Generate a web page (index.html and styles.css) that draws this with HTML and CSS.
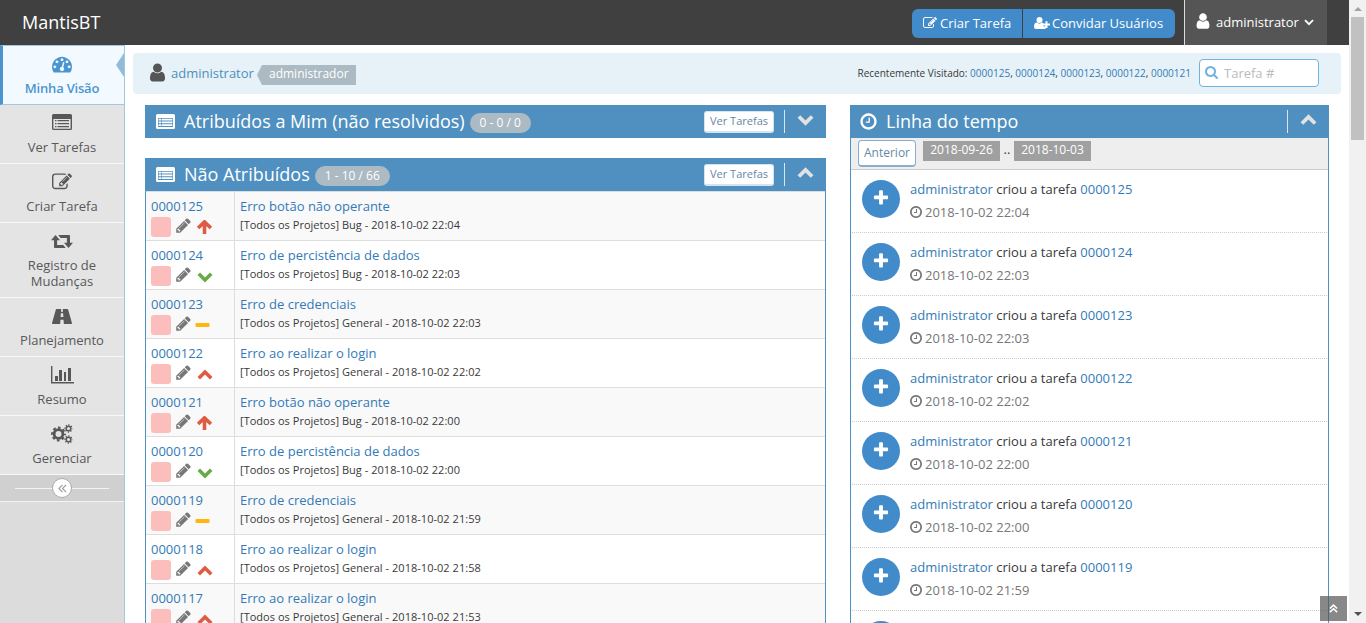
FILE: index.html
```html
<!DOCTYPE html>
<html lang="pt-BR">
<head>
<meta charset="utf-8">
<title>Minha Visão - MantisBT</title>
<link rel="stylesheet" href="styles.css">
</head>
<body>
<svg class="defs" width="0" height="0">
  <symbol id="user" viewBox="0 0 1792 1792"><path d="M1536 1399q0 109-62.5 187t-150.5 78h-854q-88 0-150.5-78t-62.5-187q0-85 8.5-160.5t31.5-152 58.5-131 94-89 134.5-34.5q131 128 313 128t313-128q76 0 134.5 34.5t94 89 58.5 131 31.5 152 8.5 160.5zm-256-887q0 159-112.5 271.5t-271.5 112.5-271.5-112.5-112.5-271.5 112.5-271.5 271.5-112.5 271.5 112.5 112.5 271.5z"/></symbol>
  <symbol id="pencil" viewBox="0 0 1792 1792"><path d="M491 1536l91-91-235-235-91 91v107h128v128h107zm523-928q0-22-22-22-10 0-17 7l-542 542q-7 7-7 17 0 22 22 22 10 0 17-7l542-542q7-7 7-17zm-54-192l416 416-832 832h-416v-416zm683 96q0 53-37 90l-166 166-416-416 166-165q36-38 90-38 53 0 91 38l235 234q37 39 37 91z"/></symbol>
  <symbol id="edit" viewBox="0 0 1792 1792"><path d="M888 1184l116-116-152-152-116 116v56h96v96h56zm440-720q-16-16-33 1l-350 350q-17 17-1 33t33-1l350-350q17-17 1-33zm80 594v190q0 119-84.5 203.5t-203.5 84.5h-832q-119 0-203.5-84.5t-84.5-203.5v-832q0-119 84.5-203.5t203.5-84.5h832q63 0 117 25 15 7 18 23 3 17-9 29l-49 49q-14 14-32 8-23-6-45-6h-832q-66 0-113 47t-47 113v832q0 66 47 113t113 47h832q66 0 113-47t47-113v-126q0-13 9-22l64-64q15-15 35-7t20 29zm-96-738l288 288-672 672h-288v-288zm444 132l-92 92-288-288 92-92q28-28 68-28t68 28l152 152q28 28 28 68t-28 68z"/></symbol>
  <symbol id="plus" viewBox="0 0 1792 1792"><path d="M1600 736v192q0 40-28 68t-68 28h-416v416q0 40-28 68t-68 28h-192q-40 0-68-28t-28-68v-416h-416q-40 0-68-28t-28-68v-192q0-40 28-68t68-28h416v-416q0-40 28-68t68-28h192q40 0 68 28t28 68v416h416q40 0 68 28t28 68z"/></symbol>
  <symbol id="clock" viewBox="0 0 1792 1792"><path d="M1024 544v448q0 14-9 23t-23 9h-320q-14 0-23-9t-9-23v-64q0-14 9-23t23-9h224v-352q0-14 9-23t23-9h64q14 0 23 9t9 23zm416 352q0-148-73-273t-198-198-273-73-273 73-198 198-73 273 73 273 198 198 273 73 273-73 198-198 73-273zm224 0q0 209-103 385.5t-279.5 279.5-385.5 103-385.5-103-279.5-279.5-103-385.5 103-385.5 279.5-279.5 385.5-103 385.5 103 279.5 279.5 103 385.5z"/></symbol>
  <symbol id="search" viewBox="0 0 1792 1792"><path d="M1216 832q0-185-131.5-316.5t-316.5-131.5-316.5 131.5-131.5 316.5 131.5 316.5 316.5 131.5 316.5-131.5 131.5-316.5zm512 832q0 52-38 90t-90 38q-54 0-90-38l-343-342q-179 124-399 124-143 0-273.5-55.5t-225-150-150-225-55.5-273.5 55.5-273.5 150-225 225-150 273.5-55.5 273.5 55.5 225 150 150 225 55.5 273.5q0 220-124 399l343 343q37 37 37 90z"/></symbol>
  <symbol id="dash" viewBox="0 0 1792 1792"><path d="M384 1152q0-53-37.500-90.500t-90.500-37.500-90.500 37.500-37.500 90.500 37.500 90.500 90.500 37.500 90.500-37.500 37.500-90.500zm192-448q0-53-37.500-90.500t-90.500-37.500-90.500 37.500-37.500 90.500 37.500 90.500 90.500 37.500 90.500-37.500 37.500-90.500zm428 481l101-382q6-26-7.500-48.500t-38.500-29.500-48 6.500-30 39.500l-101 382q-60 5-107 43.500t-63 98.500q-20 77 20 146t117 89 146-20 89-117q16-60-6-117t-72-91zm660-33q0-53-37.500-90.500t-90.500-37.500-90.500 37.500-37.500 90.500 37.500 90.500 90.500 37.500 90.500-37.500 37.500-90.500zm-640-640q0-53-37.500-90.500t-90.500-37.500-90.500 37.500-37.500 90.500 37.500 90.500 90.500 37.500 90.500-37.500 37.500-90.500zm448 192q0-53-37.500-90.500t-90.500-37.500-90.500 37.500-37.500 90.500 37.500 90.500 90.500 37.500 90.500-37.500 37.500-90.500zm320 448q0 261-141 483-19 29-54 29h-1402q-35 0-54-29-141-221-141-483 0-182 71-348t191-286 286-191 348-71 348 71 286 191 191 286 71 348z"/></symbol>
  <symbol id="list" viewBox="0 0 20 16"><path fill-rule="evenodd" d="M1.500 0h17a1.500 1.500 0 0 1 1.500 1.500v13a1.500 1.500 0 0 1-1.500 1.500h-17A1.500 1.500 0 0 1 0 14.500v-13A1.500 1.500 0 0 1 1.500 0zM1.400 5v9.700h17.200V5zM3 6h1.500v1.200H3zm2.500 0H17v1.200H5.500zM3 9h1.500v1.200H3zm2.500 0H17v1.200H5.500zM3 12h1.500v1.200H3zm2.500 0H17v1.200H5.500z"/></symbol>
  <symbol id="listbold" viewBox="0 0 19 15"><path fill-rule="evenodd" d="M1.500 0h16a1.500 1.500 0 0 1 1.500 1.500v12a1.500 1.500 0 0 1-1.500 1.500h-16A1.500 1.500 0 0 1 0 13.500v-12A1.500 1.500 0 0 1 1.500 0zM2 4v9h15V4zM2.600 4.700h2.400v1.800H2.600zm3 0h10.800v1.800H5.600zM2.600 7.500h2.400v1.800H2.600zm3 0h10.800v1.800H5.600zM2.600 10.300h2.400v1.800H2.600zm3 0h10.800v1.800H5.600z"/></symbol>
  <symbol id="retweet" viewBox="0 0 22 14"><path d="M4.500 0L9 5.200H6.100V10h6.200l2.400 3H3.700q-.7 0-.7-.7V5.200H0zM7.200 0h11.100q.7 0 .7.700v7.100h3L17.500 13 13 7.800h2.900V3H9.600z"/></symbol>
  <symbol id="road" viewBox="0 0 20 15"><path fill-rule="evenodd" d="M4.600 0h4.600L9 2.800h2L10.800 0h4.600q.5 0 .8.700l3.700 13q.3 1.300-.6 1.300h-7.500l-.3-4.300H8.500L8.200 15H.7q-.9 0-.6-1.300l3.700-13q.3-.7.8-.7zM8.900 4.200l-.3 3.800h2.800l-.3-3.800z"/></symbol>
  <symbol id="chart" viewBox="0 0 23 18"><path d="M0 0h1.400v16H23v1.400H0zM4 10h3v5H4zm4-6h3v11H8zm5 2h2v9h-2zm4-4h3v13h-3z"/></symbol>
  <symbol id="cogs" viewBox="0 0 22 20"><g fill="none" stroke="currentColor"><circle cx="7.500" cy="10" r="4.400" stroke-width="2.800"/><circle cx="7.500" cy="10" r="6.300" stroke-width="2.200" stroke-dasharray="2.600 2.348" stroke-dashoffset="1.300"/><circle cx="17.500" cy="4.500" r="2.300" stroke-width="1.500"/><circle cx="17.500" cy="4.500" r="3.500" stroke-width="1.300" stroke-dasharray="1.300 1.449" stroke-dashoffset=".65"/><circle cx="17.500" cy="15.500" r="2.300" stroke-width="1.500"/><circle cx="17.500" cy="15.500" r="3.500" stroke-width="1.300" stroke-dasharray="1.300 1.449" stroke-dashoffset=".65"/></g></symbol>
  <symbol id="userplus" viewBox="0 0 16 14"><path d="M5.500 7a3 3 0 1 0 0-6 3 3 0 0 0 0 6zM3 6.600Q5.500 8.700 8 6.600q.7 0 1.200.4v3.300h2.300V13H2Q0 13 0 11q0-4.400 3-4.400zM11.500 5.200h2v2.400H16v2h-2.500V12h-2V9.600H9v-2h2.500z"/></symbol>
  <symbol id="up" viewBox="0 0 18 12"><path d="M2 9.700l7-7 7 7" fill="none" stroke="currentColor" stroke-width="4"/></symbol>
  <symbol id="down" viewBox="0 0 18 12"><path d="M2 2.300l7 7 7-7" fill="none" stroke="currentColor" stroke-width="4"/></symbol>
  <symbol id="arrow" viewBox="0 0 16 14"><path d="M1.600 8L8 1.900 14.400 8M8 2.500V14" fill="none" stroke="currentColor" stroke-width="3.600"/></symbol>
  <symbol id="minus" viewBox="0 0 16 14"><rect x=".5" y="5" width="14" height="4" rx="1"/></symbol>
  <symbol id="dbl" viewBox="0 0 10 10"><path d="M5 1L1 5l4 4M9 1L5 5l4 4" fill="none" stroke="currentColor" stroke-width="1.200"/></symbol>
  <symbol id="dblbold" viewBox="0 0 10 10"><path d="M5 1L1.300 5 5 9M9 1L5.300 5 9 9" fill="none" stroke="currentColor" stroke-width="1.800"/></symbol>
</svg>

<div class="shell">
<div class="page">
  <header class="navbar">
    <a class="brand">MantisBT</a>
    <div class="actions"><a class="action new"><svg><use href="#edit"/></svg>Criar Tarefa</a><a class="action invite"><svg><use href="#userplus"/></svg>Convidar Usuários</a></div>
    <a class="account"><svg class="person"><use href="#user"/></svg><span>administrator</span><svg class="caret" viewBox="0 0 10 7"><path d="M1 1.200l4 4 4-4" fill="none" stroke="currentColor" stroke-width="1.800"/></svg></a>
  </header>
  <div class="body">
    <nav class="sidebar">
      <a class="item active"><svg><use href="#dash"/></svg><span>Minha Visão</span></a>
      <a class="item"><svg class="i-list"><use href="#list"/></svg><span>Ver Tarefas</span></a>
      <a class="item"><svg class="i-edit"><use href="#edit"/></svg><span>Criar Tarefa</span></a>
      <a class="item"><svg class="i-retweet"><use href="#retweet"/></svg><span>Registro de<br>Mudanças</span></a>
      <a class="item"><svg class="i-road"><use href="#road"/></svg><span>Planejamento</span></a>
      <a class="item"><svg class="i-chart"><use href="#chart"/></svg><span>Resumo</span></a>
      <a class="item"><svg class="i-cogs"><use href="#cogs"/></svg><span>Gerenciar</span></a>
      <div class="toggle"><i><svg><use href="#dbl"/></svg></i></div>
    </nav>
    <main class="main">
      <div class="crumbs">
        <svg class="person"><use href="#user"/></svg><a class="who">administrator</a><span class="role">administrador</span>
        <div class="recent">Recentemente Visitado: <a>0000125</a>, <a>0000124</a>, <a>0000123</a>, <a>0000122</a>, <a>0000121</a></div>
        <label class="search"><svg><use href="#search"/></svg><span>Tarefa #</span></label>
      </div>
      <div class="columns">
        <div class="left">
          <section class="widget">
            <h4 class="head"><svg class="hicon"><use href="#listbold"/></svg><span class="title">Atribuídos a Mim (não resolvidos)</span><span class="badge b1">0 - 0 / 0</span><a class="view">Ver Tarefas</a><span class="fold"><svg><use href="#down"/></svg></span></h4>
          </section>
          <section class="widget">
            <h4 class="head"><svg class="hicon"><use href="#listbold"/></svg><span class="title">Não Atribuídos</span><span class="badge b2">1 - 10 / 66</span><a class="view">Ver Tarefas</a><span class="fold"><svg><use href="#up"/></svg></span></h4>
            <div class="rows">
              <div class="row"><div class="id"><a>0000125</a><div class="marks"><i></i><svg class="pen"><use href="#pencil"/></svg><svg class="prio arr red"><use href="#arrow"/></svg></div></div><div class="info"><a>Erro botão não operante</a><small>[Todos os Projetos] Bug - 2018-10-02 22:04</small></div></div>
              <div class="row"><div class="id"><a>0000124</a><div class="marks"><i></i><svg class="pen"><use href="#pencil"/></svg><svg class="prio green"><use href="#down"/></svg></div></div><div class="info"><a>Erro de percistência de dados</a><small>[Todos os Projetos] Bug - 2018-10-02 22:03</small></div></div>
              <div class="row"><div class="id"><a>0000123</a><div class="marks"><i></i><svg class="pen"><use href="#pencil"/></svg><svg class="prio amber"><use href="#minus"/></svg></div></div><div class="info"><a>Erro de credenciais</a><small>[Todos os Projetos] General - 2018-10-02 22:03</small></div></div>
              <div class="row"><div class="id"><a>0000122</a><div class="marks"><i></i><svg class="pen"><use href="#pencil"/></svg><svg class="prio red"><use href="#up"/></svg></div></div><div class="info"><a>Erro ao realizar o login</a><small>[Todos os Projetos] General - 2018-10-02 22:02</small></div></div>
              <div class="row"><div class="id"><a>0000121</a><div class="marks"><i></i><svg class="pen"><use href="#pencil"/></svg><svg class="prio arr red"><use href="#arrow"/></svg></div></div><div class="info"><a>Erro botão não operante</a><small>[Todos os Projetos] Bug - 2018-10-02 22:00</small></div></div>
              <div class="row"><div class="id"><a>0000120</a><div class="marks"><i></i><svg class="pen"><use href="#pencil"/></svg><svg class="prio green"><use href="#down"/></svg></div></div><div class="info"><a>Erro de percistência de dados</a><small>[Todos os Projetos] Bug - 2018-10-02 22:00</small></div></div>
              <div class="row"><div class="id"><a>0000119</a><div class="marks"><i></i><svg class="pen"><use href="#pencil"/></svg><svg class="prio amber"><use href="#minus"/></svg></div></div><div class="info"><a>Erro de credenciais</a><small>[Todos os Projetos] General - 2018-10-02 21:59</small></div></div>
              <div class="row"><div class="id"><a>0000118</a><div class="marks"><i></i><svg class="pen"><use href="#pencil"/></svg><svg class="prio red"><use href="#up"/></svg></div></div><div class="info"><a>Erro ao realizar o login</a><small>[Todos os Projetos] General - 2018-10-02 21:58</small></div></div>
              <div class="row"><div class="id"><a>0000117</a><div class="marks"><i></i><svg class="pen"><use href="#pencil"/></svg><svg class="prio red"><use href="#up"/></svg></div></div><div class="info"><a>Erro ao realizar o login</a><small>[Todos os Projetos] General - 2018-10-02 21:53</small></div></div>
            </div>
          </section>
        </div>
        <section class="widget timeline">
          <h4 class="head"><svg class="hclock"><use href="#clock"/></svg><span class="title">Linha do tempo</span><span class="fold last"><svg><use href="#up"/></svg></span></h4>
          <div class="tools"><a class="prev">Anterior</a><span class="date">2018-09-26</span><span class="dots">..</span><span class="date">2018-10-03</span></div>
          <div class="events">
            <div class="event"><b><svg><use href="#plus"/></svg></b><div><p><a>administrator</a> criou a tarefa <a>0000125</a></p><time><svg><use href="#clock"/></svg>2018-10-02 22:04</time></div></div>
            <div class="event"><b><svg><use href="#plus"/></svg></b><div><p><a>administrator</a> criou a tarefa <a>0000124</a></p><time><svg><use href="#clock"/></svg>2018-10-02 22:03</time></div></div>
            <div class="event"><b><svg><use href="#plus"/></svg></b><div><p><a>administrator</a> criou a tarefa <a>0000123</a></p><time><svg><use href="#clock"/></svg>2018-10-02 22:03</time></div></div>
            <div class="event"><b><svg><use href="#plus"/></svg></b><div><p><a>administrator</a> criou a tarefa <a>0000122</a></p><time><svg><use href="#clock"/></svg>2018-10-02 22:02</time></div></div>
            <div class="event"><b><svg><use href="#plus"/></svg></b><div><p><a>administrator</a> criou a tarefa <a>0000121</a></p><time><svg><use href="#clock"/></svg>2018-10-02 22:00</time></div></div>
            <div class="event"><b><svg><use href="#plus"/></svg></b><div><p><a>administrator</a> criou a tarefa <a>0000120</a></p><time><svg><use href="#clock"/></svg>2018-10-02 22:00</time></div></div>
            <div class="event"><b><svg><use href="#plus"/></svg></b><div><p><a>administrator</a> criou a tarefa <a>0000119</a></p><time><svg><use href="#clock"/></svg>2018-10-02 21:59</time></div></div>
            <div class="event"><b><svg><use href="#plus"/></svg></b></div>
          </div>
        </section>
      </div>
    </main>
  </div>
  <a class="totop"><svg><use href="#dblbold"/></svg></a>
</div>
<div class="scrollbar"><i class="s-up"></i><i class="thumb"></i><i class="s-down"></i></div>
</div>
</body>
</html>
```

FILE: styles.css
```css
* { box-sizing: border-box; }
body { margin: 0; height: 623px; overflow: hidden; background: #fff; color: #393939; font: 13px/19px "Open Sans", sans-serif; }
svg { fill: currentColor; flex: none; display: block; }
.defs { position: absolute; }
a { color: #337ab7; text-decoration: none; }
h4, p { margin: 0; font-weight: 400; }

.shell { display: flex; height: 623px; }
.page { position: relative; width: 1349px; height: 623px; overflow: hidden; display: flex; flex-direction: column; }

/* top bar */
.navbar { height: 45px; flex: none; background: #404040; display: flex; align-items: center; padding: 0 22px; color: #fff; }
.navbar a { color: #fff; }
.brand { font-size: 18px; line-height: 24px; margin-right: auto; margin-bottom: 1px; }
.actions { display: flex; gap: 1px; margin: 1px 9px 0 0; }
.action { display: flex; align-items: center; height: 29px; background: #428bca; padding-left: 11px; white-space: nowrap; }
.action svg { width: 14px; height: 14px; margin-right: 3px; }
.new { width: 110px; border-radius: 6px 0 0 6px; }
.invite { width: 152px; border-radius: 0 6px 6px 0; }
.invite svg { width: 16px; margin-right: 2px; }
.account { display: flex; align-items: center; width: 143px; height: 45px; background: #555; border-left: 1px solid #ddd; padding-left: 9px; }
.account span { margin-left: 4px; }
.account .person { width: 18px; height: 18px; margin-bottom: 3px; }
.account .caret { width: 10px; height: 7px; margin: 0 0 1px 5px; }

.body { display: flex; flex: 1; min-height: 0; }

/* sidebar */
.sidebar { width: 125px; flex: none; background: #dcdcdc; border-right: 1px solid #a2c8dc; }
.item { display: flex; flex-direction: column; align-items: center; min-height: 59px; padding: 7px 0 8px; background: #e4e4e4; border-bottom: 1px solid #f8f8f8; color: #585858; text-align: center; line-height: 16px; }
.item svg { width: 20px; height: 20px; margin-bottom: 7px; }
.item .i-list { height: 16px; margin: 2px 0 9px; }
.item .i-edit { margin: 1px 0 6px; }
.item .i-retweet { width: 22px; height: 14px; margin: 5px 0 8px; }
.item .i-road { width: 20px; height: 15px; margin: 4px 0 8px; }
.item .i-chart { width: 23px; height: 18px; margin: 2px 0 7px; }
.item .i-cogs { width: 22px; height: 20px; margin: 1px 0 6px; }
.sidebar .active { position: relative; height: 60px; background: #f2f9ff; border: solid #a2c8dc; border-width: 1px 0; border-left: 3px solid #4b95cf; font-weight: 600; letter-spacing: -.2px; padding: 8px 3px 0 0; color: #4b95cf; }
.active svg { margin-bottom: 6px; }
.active::after { content: ""; position: absolute; right: 0; top: 7px; border: solid transparent; border-width: 12px 8px 12px 0; border-right-color: #91bcd9; }
.toggle { display: flex; align-items: center; height: 27px; background: #d0d0d0; border-bottom: 1px solid #f3f3f3; padding: 0 15px; }
.toggle::before, .toggle::after { content: ""; flex: 1; height: 1px; background: #f3f3f3; }
.toggle i { width: 20px; height: 20px; border: 1px solid #aaa; border-radius: 50%; background: #fff; color: #999; display: flex; align-items: center; justify-content: center; }
.toggle svg { width: 9px; height: 9px; }

/* breadcrumbs */
.main { width: 1224px; padding: 8px 8px 0; }
.crumbs { height: 41px; background: #e7f2f8; border-radius: 4px; display: flex; align-items: center; padding: 0 22px 0 14px; white-space: nowrap; }
.crumbs .person { width: 21px; height: 21px; color: #555; margin-bottom: 3px; }
.who { color: #4c8fbd; margin-left: 3px; width: 84px; }
.role { height: 20px; line-height: 18px; margin: 3px 0 0 2px; padding: 0 7px 0 12px; width: 99px; color: #fff; background: #abbac3; clip-path: polygon(5px 0, 100% 0, 100% 100%, 5px 100%, 0 50%); font-size: 12px; }
.recent { margin-left: auto; margin-right: 8px; font-size: 10px; }
.search { display: flex; align-items: center; width: 120px; height: 28px; margin-bottom: 1px; background: #fff; border: 1px solid #6fb3e0; border-radius: 4px; padding-left: 5px; color: #bbb; }
.search svg { width: 15px; height: 14px; color: #6fb3e0; margin: 0 5px 2px -1px; }

/* widgets */
.columns { display: flex; gap: 24px; padding: 11px 12px 0; align-items: flex-start; }
.left { width: 681px; display: flex; flex-direction: column; gap: 20px; }
.timeline { width: 479px; }
.head { height: 33px; background: #4f90c1; color: #fff; display: flex; align-items: center; padding-left: 10px; font-size: 18px; white-space: nowrap; }
.hicon { width: 19px; height: 15px; margin: 0 9px 1px 1px; }
.hclock { width: 19px; height: 19px; margin: 0 8px 1px -1px; }
.badge { height: 20px; border-radius: 10px; background: #abbac3; font-size: 12px; line-height: 19px; text-align: center; margin: 3px 0 0 5px; }
.b1 { width: 61px; }
.b2 { width: 75px; }
.view { margin-left: auto; width: 70px; height: 22px; margin-top: 1px; background: #fff; border: 1px solid #d5e4f1; border-bottom-width: 2px; border-radius: 3px; font-size: 11px; line-height: 18px; text-align: center; color: #6688a6; }
.fold { width: 42px; height: 23px; margin-left: 10px; border-left: 1px solid #d9e7f2; padding: 5px 0 0 12px; color: #e2e2e2; }
.fold svg { width: 17px; height: 12px; margin-top: -1px; }
.last { margin-left: auto; }

.rows { border: solid #4f90c1; border-width: 0 1px; box-shadow: inset 0 1px #ddd; padding-top: 1px; }
.row { display: flex; height: 49px; border-bottom: 1px solid #ddd; background: #fff; }
.row:nth-child(odd) { background: #f9f9f9; }
.id { width: 89px; border-right: 1px solid #ddd; padding: 5px 0 0 5px; }
.id > a, .info > a { display: block; line-height: 19px; }
.marks { display: flex; align-items: center; height: 20px; margin-top: 1px; }
.marks i { width: 20px; height: 20px; border-radius: 3px; background: #fcbdbd; }
.pen { width: 17px; height: 17px; color: #777; margin: -4px 0 0 4px; }
.prio { width: 16px; height: 14px; margin: 2px 0 0 5px; }
.arr { width: 17px; height: 14px; margin: 0 0 0 4px; }
.red { color: #e05b43; }
.green { color: #69aa46; }
.amber { color: #ffb60f; margin: -1px 0 0 3px; }
.info { padding: 5px 0 0 5px; }
.info small { display: block; font-size: 11px; line-height: 18px; letter-spacing: .03px; }

/* timeline */
.tools { display: flex; height: 32px; background: #eee; border: solid #4f90c1; border-width: 0 1px; box-shadow: inset 0 -1px #ccc; padding: 2px 7px; line-height: 18px; }
.prev { width: 58px; height: 27px; border: 1px solid #8aafce; border-bottom-width: 2px; border-radius: 4px; background: #fff; color: #6688a6; font-size: 12px; line-height: 24px; text-align: center; margin-right: 7px; }
.date { width: 77px; height: 20px; background: #a0a0a0; color: #fff; text-align: center; font-size: 12px; margin-top: 1px; }
.dots { width: 14px; text-align: center; }
.events { border: solid #4f90c1; border-width: 0 1px; }
.event { display: flex; height: 63px; margin: 0 1px; border-bottom: 1px dotted #ccc; padding: 10px 0 0 10px; }
.event b { width: 38px; height: 38px; border-radius: 50%; background: #428bca; color: #fff; display: flex; align-items: center; justify-content: center; margin-right: 10px; }
.event b svg { width: 18px; height: 18px; margin: 0 0 2px; }
.event time { display: flex; align-items: center; color: #777; margin-top: 4px; }
.event time svg { width: 14px; height: 14px; margin: 0 2px 1px -1px; }

.totop { position: absolute; left: 1320px; top: 596px; width: 27px; height: 25px; background: rgba(85, 85, 85, .7); color: #fff; display: flex; align-items: center; justify-content: center; }
.totop svg { width: 9px; height: 9px; transform: rotate(90deg); }

.scrollbar { width: 17px; flex: none; background: #f1f1f1; display: flex; flex-direction: column; align-items: center; }
.s-up { border: 4px solid transparent; border-top: 0; border-bottom-color: #a3a3a3; margin: 7px 0 6px; }
.thumb { width: 13px; height: 123px; background: #c1c1c1; }
.s-down { border: 4px solid transparent; border-bottom: 0; border-top-color: #505050; margin: auto 0 7px; }
```
